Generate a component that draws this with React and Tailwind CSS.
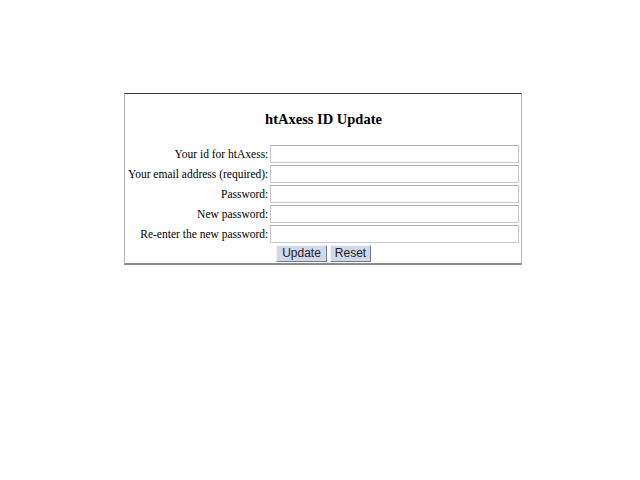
import React from 'react';

const fields = [
  'Your id for htAxess:',
  'Your email address (required):',
  'Password:',
  'New password:',
  'Re-enter the new password:',
];

const App = () => {
  return (
    <div className="w-[640px] h-[480px] bg-white pt-[93px] font-['Liberation_Serif',serif] text-black">
      <div className="ml-[124px] w-[398px] border-t border-t-[#3c3c3c] border-x border-x-[#b4b4b4] border-b-2 border-b-[#8c8c8c] bg-white pl-[3px] pr-[2px] pt-[16px] pb-[1px]">
        <h1 className="text-center text-[14.5px] font-bold leading-[18px] mb-[17px]">htAxess ID Update</h1>
        <div className="grid grid-cols-[auto_1fr] gap-x-[2px] gap-y-[2px] items-center">
          {fields.map((label) => (
            <React.Fragment key={label}>
              <label className="text-right text-[11.5px] leading-[18px] whitespace-nowrap">{label}</label>
              <input
                type={label.includes('assword') ? 'password' : 'text'}
                className="h-[18px] w-full border border-[#c8c8c8] border-t-[#b0b0b0] bg-white outline-none"
              />
            </React.Fragment>
          ))}
        </div>
        <div className="flex justify-center gap-[3px] mt-[2px] font-['Liberation_Sans',sans-serif] text-[12px]">
          <button className="h-[17px] w-[51px] leading-[15px] border border-[#f0f4fa] border-b-[#6e7a8c] border-r-[#6e7a8c] bg-[#cfd9ea] text-[#222]">Update</button>
          <button className="h-[17px] w-[41px] leading-[15px] border border-[#f0f4fa] border-b-[#6e7a8c] border-r-[#6e7a8c] bg-[#cfd9ea] text-[#222]">Reset</button>
        </div>
      </div>
    </div>
  );
};

export default App;
